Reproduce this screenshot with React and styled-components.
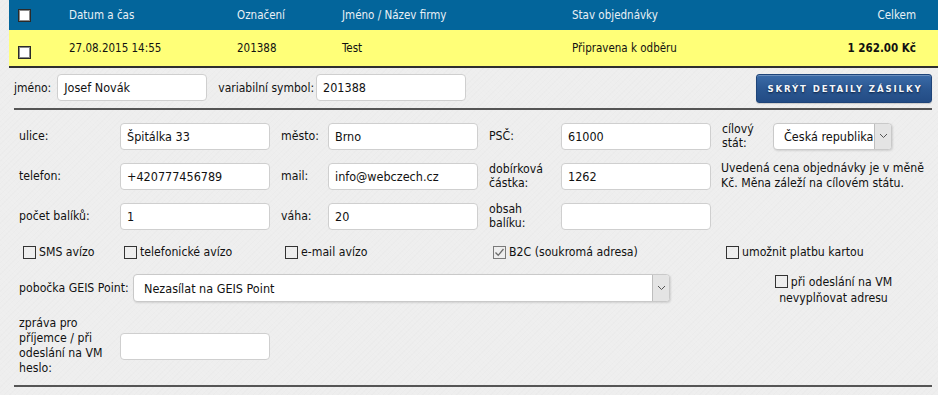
import React from "react";
import styled, { createGlobalStyle } from "styled-components";

const Global = createGlobalStyle`
  html, body { margin: 0; padding: 0; }
  body {
    background-color: #eeeeee;
    background-image:
      repeating-linear-gradient(45deg, rgba(255,255,255,0.08) 0 1px, transparent 1px 3px),
      repeating-linear-gradient(-45deg, rgba(0,0,0,0.012) 0 1px, transparent 1px 4px);
    font-family: "DejaVu Sans Condensed", "DejaVu Sans", sans-serif;
    font-stretch: condensed;
    color: #111;
    font-size: 12px;
  }
  * { box-sizing: border-box; }
`;

const Page = styled.div`
  width: 938px;
  height: 395px;
  overflow: hidden;
  padding-left: 9px;
`;

const OrderTable = styled.div`
  width: 929px;
`;

const Row = styled.div`
  display: grid;
  grid-template-columns: 60px 168px 105px 230px 194px 1fr;
  align-items: center;
  height: ${(p) => (p.$head ? "30px" : "38px")};
  padding-right: 22px;
  background: ${(p) => (p.$head ? "#03659b" : "#ffff78")};
  color: ${(p) => (p.$head ? "#e9f0f6" : "#111")};
  border-bottom: ${(p) => (p.$head ? "none" : "2px solid #2f2f2f")};
  font-size: 11.5px;
`;

const Cell = styled.div`
  font-weight: ${(p) => (p.$bold ? "bold" : "normal")};
  padding-left: ${(p) => (p.$box ? "9px" : "0")};
  display: flex;
  justify-content: ${(p) => (p.$right ? "flex-end" : "flex-start")};
  padding-top: ${(p) => (p.$box && !p.$head ? "8px" : "0")};
`;

const TableBox = styled.span`
  display: inline-block;
  width: 13px;
  height: 13px;
  background: #fff;
  border: 1px solid #2a2a2a;
  box-shadow: inset 0 0 0 1px #8a8a8a;
`;

const Details = styled.div`
  margin-left: 5px;
  width: 918px;
`;

const TopRow = styled.div`
  display: flex;
  align-items: flex-start;
  height: 40px;
  padding-top: 6px;
`;

const InlineLabel = styled.label`
  height: 27px;
  display: flex;
  align-items: center;
  margin-right: ${(p) => p.$gap || 4}px;
  margin-left: ${(p) => p.$lead || 0}px;
  white-space: nowrap;
`;

const TextInput = styled.div`
  width: ${(p) => p.$w || 150}px;
  height: 27px;
  background: #fff;
  border: 1px solid #cfcfcf;
  border-radius: 4px;
  padding: 0 6px;
  display: flex;
  align-items: center;
  font-size: 12.5px;
  color: #111;
  white-space: nowrap;
`;

const Button = styled.button`
  margin-left: auto;
  width: 176px;
  height: 29px;
  border: 1px solid #1e4479;
  border-radius: 3px;
  background: linear-gradient(#3b6ba8, #2a5690 55%, #234c85);
  color: #f4f7fb;
  font-family: inherit;
  font-stretch: condensed;
  font-weight: bold;
  font-size: 9.5px;
  letter-spacing: 1.9px;
  text-shadow: 0 1px 2px #0b1f3d;
  box-shadow: inset 0 1px 0 rgba(255, 255, 255, 0.25), 0 1px 1px rgba(0,0,0,0.15);
  padding: 0 0 0 2px;
`;

const Rule = styled.div`
  height: 2px;
  background: #555;
`;

const FieldGrid = styled.div`
  display: grid;
  grid-template-columns: 101px 150px 58px 150px 83px 150px 62px 119px;
  grid-template-rows: repeat(3, 32px);
  row-gap: 8px;
  align-items: center;
  padding: 10px 0 0 5px;
`;

const Label = styled.div`
  padding-left: ${(p) => (p.$first ? "0" : "11px")};
  line-height: 14.5px;
  font-size: 12.2px;
`;

const Note = styled.div`
  grid-column: 7 / span 2;
  padding-left: 10px;
  line-height: 15px;
  font-size: 12.2px;
  white-space: nowrap;
`;

const Select = styled.div`
  width: ${(p) => p.$w}px;
  height: ${(p) => p.$h || 27}px;
  background: #fff;
  border: 1px solid #c9c9c9;
  border-radius: 4px;
  display: flex;
  align-items: stretch;
  overflow: hidden;
  box-shadow: 1px 1px 2px rgba(0, 0, 0, 0.12);
  font-size: 12.5px;
`;

const SelectText = styled.div`
  flex: 1;
  display: flex;
  align-items: center;
  padding-left: 10px;
  white-space: nowrap;
`;

const Arrow = styled.div`
  width: 17px;
  background: #e4e4e4;
  border-left: 1px solid #bdbdbd;
  display: flex;
  align-items: center;
  justify-content: center;
`;

const CheckRow = styled.div`
  display: flex;
  align-items: center;
  margin-top: 12px;
  height: 16px;
  padding-left: 9px;
`;

const CheckItem = styled.label`
  display: flex;
  align-items: center;
  width: ${(p) => (p.$w ? `${p.$w}px` : "auto")};
  font-size: 12.2px;
  white-space: nowrap;
`;

const Box = styled.span`
  display: inline-flex;
  align-items: center;
  justify-content: center;
  width: 13px;
  height: 13px;
  border: 1px solid ${(p) => (p.$checked ? "#7a7a7a" : "#333")};
  margin-right: 3px;
  flex: none;
  vertical-align: -2px;
`;

const GeisRow = styled.div`
  display: flex;
  align-items: flex-start;
  margin-top: 14px;
  padding-left: 5px;
`;

const GeisLabel = styled.div`
  width: 114px;
  height: 28px;
  display: flex;
  align-items: center;
  font-size: 12.2px;
  white-space: nowrap;
`;

const VmBlock = styled.div`
  margin-left: 96px;
  width: 135px;
  text-align: center;
  line-height: 16px;
  font-size: 12.2px;
`;

const MessageRow = styled.div`
  display: flex;
  align-items: center;
  margin-top: 10px;
  margin-bottom: 9px;
  padding-left: 5px;
`;

const MessageLabel = styled.div`
  width: 101px;
  line-height: 15px;
  font-size: 12.2px;
`;

const Check = ({ checked }) => (
  <Box $checked={checked}>
    {checked && (
      <svg width="11" height="11" viewBox="0 0 11 11">
        <path d="M1.5 5.5 L4.2 8.3 L9.5 2" fill="none" stroke="#6b6b6b" strokeWidth="1.3" />
      </svg>
    )}
  </Box>
);

const Chevron = () => (
  <svg width="9" height="6" viewBox="0 0 9 6">
    <path d="M1 1 L4.5 4.5 L8 1" fill="none" stroke="#555" strokeWidth="1" />
  </svg>
);

export default function App() {
  return (
    <>
      <Global />
      <Page>
        <OrderTable>
          <Row $head>
            <Cell $box $head>
              <TableBox />
            </Cell>
            <Cell>Datum a čas</Cell>
            <Cell>Označení</Cell>
            <Cell>Jméno / Název firmy</Cell>
            <Cell>Stav objednávky</Cell>
            <Cell $right>Celkem</Cell>
          </Row>
          <Row>
            <Cell $box>
              <TableBox />
            </Cell>
            <Cell>27.08.2015 14:55</Cell>
            <Cell>201388</Cell>
            <Cell>Test</Cell>
            <Cell>Připravena k odběru</Cell>
            <Cell $right $bold>
              1 262.00 Kč
            </Cell>
          </Row>
        </OrderTable>

        <Details>
          <TopRow>
            <InlineLabel $gap={6}>jméno:</InlineLabel>
            <TextInput $w={150}>Josef Novák</TextInput>
            <InlineLabel $lead={11} $gap={2}>
              variabilní symbol:
            </InlineLabel>
            <TextInput $w={150}>201388</TextInput>
            <Button>SKRÝT DETAILY ZÁSILKY</Button>
          </TopRow>
          <Rule />

          <FieldGrid>
            <Label $first>ulice:</Label>
            <TextInput>Špitálka 33</TextInput>
            <Label>město:</Label>
            <TextInput>Brno</TextInput>
            <Label>PSČ:</Label>
            <TextInput>61000</TextInput>
            <Label>
              cílový
              <br />
              stát:
            </Label>
            <Select $w={119}>
              <SelectText>Česká republika</SelectText>
              <Arrow>
                <Chevron />
              </Arrow>
            </Select>

            <Label $first>telefon:</Label>
            <TextInput>+420777456789</TextInput>
            <Label>mail:</Label>
            <TextInput>info@webczech.cz</TextInput>
            <Label>
              dobírková
              <br />
              částka:
            </Label>
            <TextInput>1262</TextInput>
            <Note>
              Uvedená cena objednávky je v měně
              <br />
              Kč. Měna záleží na cílovém státu.
            </Note>

            <Label $first>počet balíků:</Label>
            <TextInput>1</TextInput>
            <Label>váha:</Label>
            <TextInput>20</TextInput>
            <Label>
              obsah
              <br />
              balíku:
            </Label>
            <TextInput />
          </FieldGrid>

          <CheckRow>
            <CheckItem $w={101}>
              <Check />
              SMS avízo
            </CheckItem>
            <CheckItem $w={161}>
              <Check />
              telefonické avízo
            </CheckItem>
            <CheckItem $w={208}>
              <Check />
              e-mail avízo
            </CheckItem>
            <CheckItem $w={233}>
              <Check checked />
              B2C (soukromá adresa)
            </CheckItem>
            <CheckItem>
              <Check />
              umožnit platbu kartou
            </CheckItem>
          </CheckRow>

          <GeisRow>
            <GeisLabel>pobočka GEIS Point:</GeisLabel>
            <Select $w={537} $h={28}>
              <SelectText>Nezasílat na GEIS Point</SelectText>
              <Arrow>
                <Chevron />
              </Arrow>
            </Select>
            <VmBlock>
              <Check />
              při odeslání na VM nevyplňovat adresu
            </VmBlock>
          </GeisRow>

          <MessageRow>
            <MessageLabel>
              zpráva pro
              <br />
              příjemce / při
              <br />
              odeslání na VM
              <br />
              heslo:
            </MessageLabel>
            <TextInput />
          </MessageRow>
          <Rule />
        </Details>
      </Page>
    </>
  );
}
